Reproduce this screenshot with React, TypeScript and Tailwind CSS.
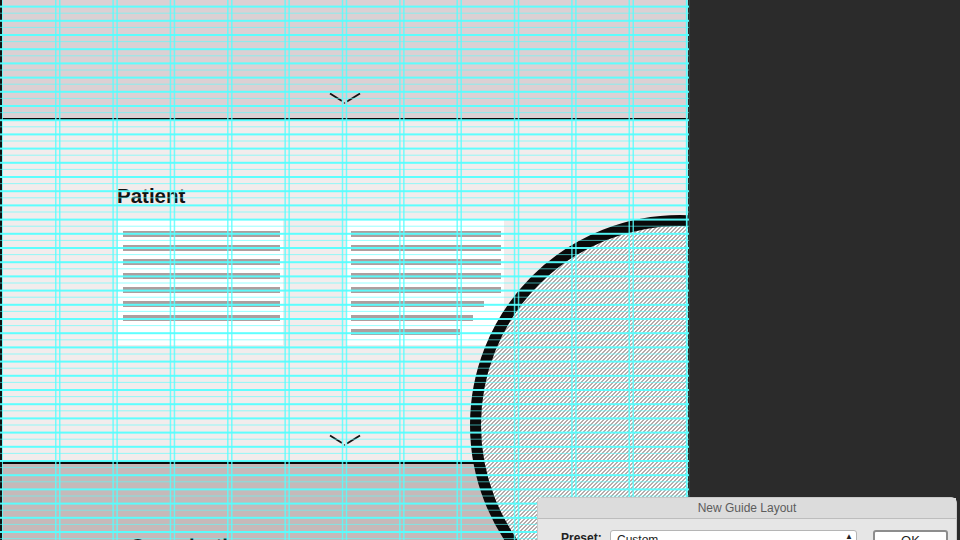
const columnGuides = Array.from({ length: 12 }, (_, i) => 55.5 + i * 57.35)
const rowGuides = Array.from({ length: 76 }, (_, i) => 5.6 + i * 7.1)

const leftLines = ['w-full', 'w-full', 'w-full', 'w-full', 'w-full', 'w-full', 'w-full']
const rightLines = ['w-full', 'w-full', 'w-full', 'w-full', 'w-full', 'w-[133px]', 'w-[122px]', 'w-[109px]']

function Copy({ lines, className }: { lines: string[]; className: string }) {
  return (
    <div className={`flex h-[125px] flex-col gap-[8px] bg-white pl-[5px] pr-[3px] pt-[11px] ${className}`}>
      {lines.map((w, i) => (
        <div key={i} className={`h-[6px] shrink-0 bg-[#ac9f9f] ${w}`} />
      ))}
    </div>
  )
}

function Chevron({ className }: { className: string }) {
  return (
    <svg className={className} width="34" height="14" viewBox="0 0 34 14" fill="none">
      <path d="M1 1.5 L13 9" stroke="#111" strokeWidth="1.8" />
      <path d="M31 1.5 L18 9.5" stroke="#111" strokeWidth="1.8" />
      <path d="M15 10.5 L16 11.5" stroke="#333" strokeWidth="1.2" />
    </svg>
  )
}

function Guides() {
  return (
    <svg className="absolute left-0 top-0" width="690" height="540" viewBox="0 0 690 540">
      <rect x="0" y="0" width="2" height="540" fill="#111" />
      {rowGuides.map((y, i) => (
        <rect key={y} x="0" y={y} width="689" height={i % 2 === 0 ? 2 : 1} fill="#55ffff" opacity={i % 2 === 0 ? 0.95 : 0.6} />
      ))}
      {columnGuides.map((x) => (
        <g key={x} fill="#55ffff" opacity="0.8">
          <rect x={x - 0.5} y="0" width="1.5" height="540" />
          <rect x={x + 3.5} y="0" width="1.5" height="540" />
        </g>
      ))}
      <rect x="686" y="0" width="1.5" height="540" fill="#55ffff" opacity="0.8" />
      <rect x="2" y="0" width="1" height="540" fill="#55ffff" opacity="0.8" />
    </svg>
  )
}

function GuideDialog() {
  return (
    <div className="absolute left-[537px] top-[497px] h-[60px] w-[420px] rounded-t-md border border-[#c9c9c9] bg-[#e6e6e6] font-['Liberation_Sans',sans-serif]">
      <div className="flex h-[21px] items-center justify-center border-b border-[#bdbdbd] bg-[#dcdcdc] text-[12px] text-[#5c5c5c]">
        New Guide Layout
      </div>
      <div className="flex items-start pl-[23px] pt-[11px]">
        <span className="w-[49px] pt-[1px] text-[12px] font-bold leading-[14px] text-[#222]">Preset:</span>
        <div className="flex h-[22px] w-[247px] justify-between rounded-[3px] border border-[#b5b5b5] bg-white pl-[6px] pr-[3px] text-[12px] leading-[18px] text-[#222]">
          <span>Custom</span>
          <span className="text-[8px] leading-[12px]">▲</span>
        </div>
        <div className="ml-[16px] flex h-[24px] w-[75px] justify-center rounded-[3px] border-2 border-[#8d8d8d] bg-white text-[13px] leading-[18px] text-[#222]">
          OK
        </div>
      </div>
    </div>
  )
}

export default function App() {
  return (
    <div className="relative flex h-[540px] w-[960px] overflow-hidden bg-[#2b2b2b] font-['Liberation_Sans',sans-serif]">
      <div className="relative flex h-[540px] w-[688px] shrink-0 flex-col overflow-hidden bg-white">
        <div className="h-[118px] shrink-0 bg-[#dcd0d3]" />
        <div className="h-[346px] shrink-0 border-t-[2px] border-b-[3px] border-[#0a0a0a] bg-[#f2ecec] pl-[118px] pt-[64px]">
          <div className="-ml-px text-[20.5px] font-bold leading-[24px] text-[#111]">Patient</div>
          <div className="mt-[12px] flex">
            <Copy lines={leftLines} className="w-[165px]" />
            <Copy lines={rightLines} className="ml-[63px] w-[158px]" />
          </div>
        </div>
        <div className="flex-1 bg-[#c6b9b9] pl-[130px] pt-[70px]">
          <div className="text-[20px] font-bold leading-[24px] text-[#111]">Organization</div>
        </div>
        <div className="absolute left-[470px] top-[215px] h-[420px] w-[420px] rounded-full border-[11px] border-[#0a0a0a] bg-[repeating-linear-gradient(135deg,#b5abab_0px,#b5abab_1.1px,#ffffff_1.1px,#ffffff_2.828px)]" />
        <Chevron className="absolute left-[329px] top-[92px]" />
        <Chevron className="absolute left-[329px] top-[434px]" />
      </div>
      <Guides />
      <GuideDialog />
    </div>
  )
}
